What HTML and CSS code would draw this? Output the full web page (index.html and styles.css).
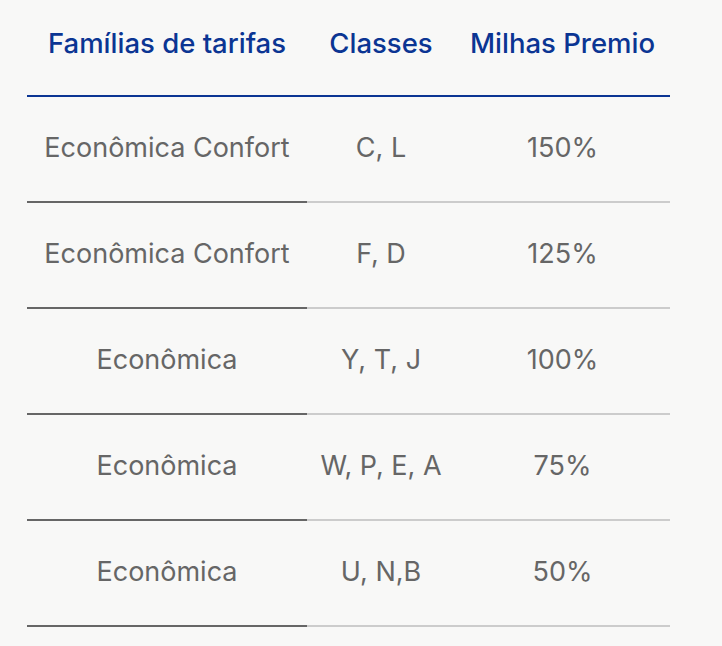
FILE: index.html
```html
<!DOCTYPE html>
<html lang="pt">
<head>
<meta charset="utf-8">
<link rel="stylesheet" href="styles.css">
</head>
<body>
<div class="wrap">
<table class="fares">
  <colgroup>
    <col class="c1"><col class="c2"><col class="c3">
  </colgroup>
  <thead>
    <tr><th>Famílias de tarifas</th><th>Classes</th><th>Milhas Premio</th></tr>
  </thead>
  <tbody>
    <tr><td>Econômica Confort</td><td>C, L</td><td>150%</td></tr>
    <tr><td>Econômica Confort</td><td>F, D</td><td>125%</td></tr>
    <tr><td>Econômica</td><td>Y, T, J</td><td>100%</td></tr>
    <tr><td>Econômica</td><td>W, P, E, A</td><td>75%</td></tr>
    <tr><td>Econômica</td><td>U, N,B</td><td>50%</td></tr>
  </tbody>
</table>
</div>
</body>
</html>
```

FILE: styles.css
```css
html, body {
  margin: 0;
  padding: 0;
  background: #f8f8f7;
}
.wrap {
  padding: 0 27px;
}
.fares {
  width: 643px;
  border-collapse: collapse;
  table-layout: fixed;
  font-family: Inter, "Liberation Sans", Arial, sans-serif;
  font-size: 27px;
}
.c1 { width: 280px; }
.c2 { width: 148px; }
.c3 { width: 215px; }
.fares th {
  height: 94px;
  padding: 0 0 10px;
  color: #0b3593;
  font-size: 27.5px;
  font-weight: 500;
  text-align: center;
  vertical-align: middle;
  border-bottom: 2px solid #0b3593;
  box-sizing: border-box;
}
.fares thead tr { height: 96px; }
.fares td {
  padding: 0 0 3px;
  height: 101px;
  color: #666;
  text-align: center;
  vertical-align: middle;
  border-bottom: 2px solid #cccccc;
}
.fares td:first-child {
  border-bottom-color: #666;
}
```
